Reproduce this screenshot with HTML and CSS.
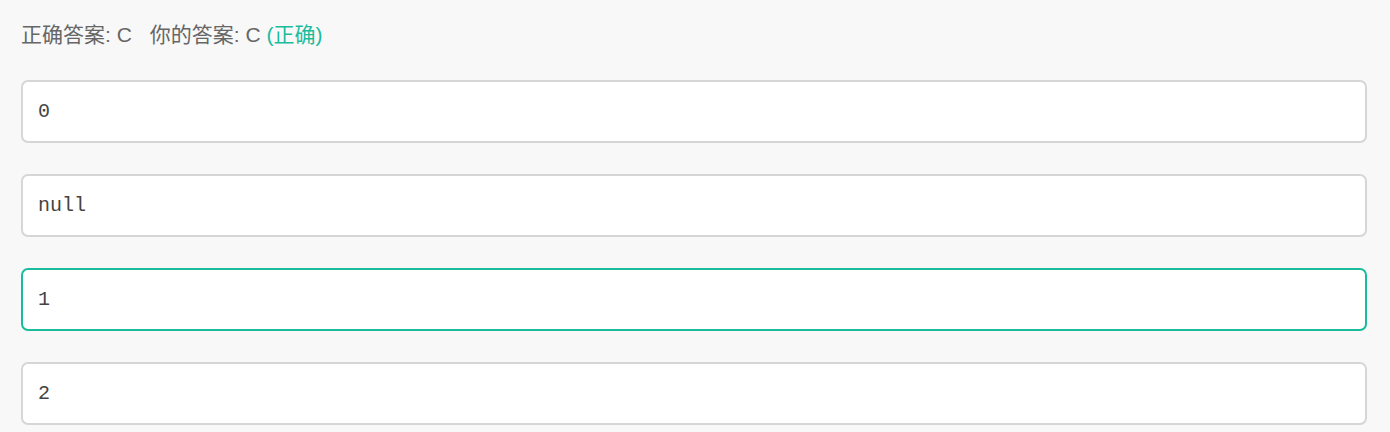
FILE: index.html
```html
<!DOCTYPE html>
<html lang="zh">
<head>
<meta charset="utf-8">
<link rel="stylesheet" href="styles.css">
</head>
<body>
<div class="page">
  <div class="result">
    <span class="label">正确答案: C</span>
    <span class="label">你的答案: C <span class="ok">(正确)</span></span>
  </div>
  <div class="options">
    <div class="option"><code>0</code></div>
    <div class="option"><code>null</code></div>
    <div class="option option-correct"><code>1</code></div>
    <div class="option"><code>2</code></div>
  </div>
</div>
</body>
</html>
```
FILE: styles.css
```css
html, body {
  margin: 0;
  padding: 0;
  background: #f8f8f8;
}
.page {
  padding: 0 23px 0 21px;
  font-family: "Liberation Sans", "Noto Sans CJK SC", sans-serif;
}
.result {
  height: 70px;
  box-sizing: border-box;
  padding-bottom: 1px;
  display: flex;
  align-items: center;
  gap: 18px;
  font-size: 21px;
  line-height: 24px;
  color: #666;
}
.ok {
  color: #1abc9c;
}
.options {
  display: flex;
  flex-direction: column;
  gap: 31px;
  padding-top: 10px;
}
.option {
  height: 63px;
  box-sizing: border-box;
  border: 2px solid #d6d6d6;
  border-radius: 7px;
  background: #fff;
  display: flex;
  align-items: center;
  padding-left: 15px;
}
.option-correct {
  border-color: #1abc9c;
}
.option code {
  font-family: "Courier New", "Liberation Mono", monospace;
  font-size: 20px;
  color: #444;
}
```
